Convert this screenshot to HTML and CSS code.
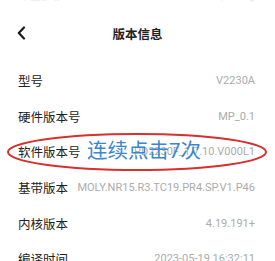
FILE: index.html
```html
<!DOCTYPE html>
<html lang="zh">
<head>
<meta charset="utf-8">
<link rel="stylesheet" href="styles.css">
</head>
<body>
<div class="phone">
  <div class="status">
    <span class="status-left">中国移动 <span class="dot">●</span> 5G</span>
    <span class="status-right">4.5K/s 令 88% ▮</span>
  </div>
  <div class="header">
    <svg class="back" width="10" height="14" viewBox="0 0 10 14"><polyline points="7,1.5 1.8,7 7,12.5" fill="none" stroke="#1a1a1a" stroke-width="2.2" stroke-linecap="round" stroke-linejoin="round"/></svg>
    <div class="title">版本信息</div>
  </div>
  <div class="list">
    <div class="row"><span class="label">型号</span><span class="value">V2230A</span></div>
    <div class="row"><span class="label">硬件版本号</span><span class="value">MP_0.1</span></div>
    <div class="row row-mark">
      <span class="label">软件版本号</span><span class="value">PD2230F_1.7.10.V000L1</span>
      <svg class="ring" width="264" height="42" viewBox="0 0 264 42"><ellipse cx="131" cy="21" rx="129" ry="18" fill="none" stroke="#d6302f" stroke-width="2"/></svg>
      <span class="note">连续点击7次</span>
    </div>
    <div class="row"><span class="label">基带版本</span><span class="value">MOLY.NR15.R3.TC19.PR4.SP.V1.P46</span></div>
    <div class="row"><span class="label">内核版本</span><span class="value">4.19.191+</span></div>
    <div class="row"><span class="label">编译时间</span><span class="value">2023-05-19 16:32:11</span></div>
  </div>
</div>
</body>
</html>
```
FILE: styles.css
```css
html, body {
  margin: 0;
  padding: 0;
  background: #ffffff;
}
.phone {
  width: 275px;
  height: 261px;
  overflow: hidden;
  font-family: Roboto, "Noto Sans CJK SC", sans-serif;
  color: #1f1f1f;
}
.status {
  height: 20px;
  display: flex;
  justify-content: space-between;
  padding: 0 20px;
  font-size: 10px;
  color: #ececec;
  line-height: 10px;
  margin-top: -8px;
  margin-bottom: 8px;
}
.status .dot {
  color: #f8d2bc;
}
.header {
  height: 26px;
  position: relative;
  display: flex;
  align-items: center;
  justify-content: center;
}
.back {
  position: absolute;
  left: 17px;
  top: 6px;
}
.title {
  font-size: 12.5px;
  font-weight: 700;
  color: #222;
}
.list {
  margin-top: 17px;
}
.row {
  height: 35.6px;
  display: flex;
  align-items: center;
  justify-content: space-between;
  padding: 0 20px 0 18px;
  position: relative;
}
.label {
  font-size: 12.5px;
  color: #222;
}
.value {
  font-size: 11px;
  color: #ababab;
}
.ring {
  position: absolute;
  left: 6px;
  top: -3px;
}
.note {
  position: absolute;
  left: 87px;
  top: 4px;
  font-size: 20.5px;
  font-weight: 400;
  color: #3b86cf;
  line-height: 26px;
}
```
